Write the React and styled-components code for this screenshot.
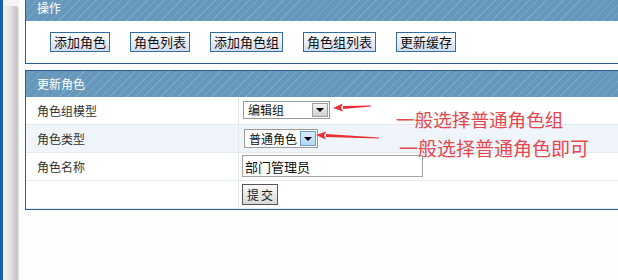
import React from "react";
import styled, { createGlobalStyle } from "styled-components";

const GlobalStyle = createGlobalStyle`
  html, body {
    margin: 0;
    padding: 0;
    background: #fdfdfd;
    overflow: hidden;
  }
  body {
    font-family: "Noto Sans CJK SC", "Liberation Sans", sans-serif;
    font-size: 12px;
    color: #333;
  }
`

const Page = styled.div`
  display: flex;
  width: 618px;
  height: 280px;
  overflow: hidden;
`

const Frame = styled.div`
  flex: 0 0 19px;
  display: flex;
  background: #fdfdfd;
`

const FrameEdge = styled.div`
  width: 3px;
  background: #1d5fb3;
`

const ScrollTrack = styled.div`
  width: 16px;
  padding-top: 6px;
  background: #f4f4f4;
`

const ScrollThumb = styled.div`
  height: 100%;
  margin-left: 1px;
  border-top-right-radius: 4px;
  background: linear-gradient(90deg, #f2f2f2 0%, #e4e4e4 40%, #c4c4c4 85%, #e8e8e8 100%);
`

const Main = styled.div`
  flex: 1;
  padding-left: 6px;
  display: flex;
  flex-direction: column;
  gap: 6px;
`

const Panel = styled.div`
  position: relative;
  width: 640px;
  border: 1px solid #2c5d90;
  border-right: none;
  margin-top: ${p => p.$offset || 0}px;
  background: #fff;
`

const PanelHeader = styled.div`
  height: 26px;
  line-height: 26px;
  padding-left: 11px;
  color: #fff;
  font-size: 12px;
  background: repeating-linear-gradient(135deg, #6797ba 0 5px, #7ca8c7 5px 6px);
`

const Toolbar = styled.div`
  display: flex;
  gap: 20px;
  padding: 11px 24px 11px 24px;
`

const ToolButton = styled.button`
  height: 20px;
  padding: 0 3px;
  border: 1px solid #2f6e9e;
  background: linear-gradient(#ffffff, #d3dbef);
  font-family: inherit;
  font-size: 13px;
  line-height: 18px;
  color: #111;
`

const Row = styled.div`
  display: grid;
  grid-template-columns: 213px 1fr;
  height: 27px;
  border-bottom: 1px solid #e3ebf2;
  background: ${p => (p.$alt ? "#eff5fa" : "#fff")};
`

const Label = styled.div`
  padding-left: 11px;
  line-height: 27px;
  border-right: 1px solid #e3ebf2;
  color: #333;
`

const Field = styled.div`
  display: flex;
  align-items: flex-start;
  padding-top: ${p => p.$top}px;
  padding-left: ${p => p.$left}px;
`

const SelectBox = styled.div`
  display: flex;
  width: ${p => p.$width}px;
  height: ${p => p.$height}px;
  border: 1px solid #9a9a9a;
  box-sizing: border-box;
  background: #fff;
`

const SelectText = styled.span`
  flex: 1;
  padding-left: 4px;
  font-size: 12px;
  line-height: ${p => p.$height - 2}px;
  color: #111;
`

const SelectArrow = styled.span`
  width: 16px;
  margin: 1px;
  display: flex;
  align-items: center;
  justify-content: center;
  box-sizing: border-box;
  border: 1px solid ${p => (p.$hover ? "#6d9cc9" : "#a0a0a0")};
  background: ${p =>
    p.$hover
      ? "linear-gradient(#d8ebfb, #b6d6f3)"
      : "linear-gradient(#f4f4f4, #cfcfcf)"};

  &::after {
    content: "";
    border-left: 4px solid transparent;
    border-right: 4px solid transparent;
    border-top: 4px solid #000;
  }
`

const TextInput = styled.input`
  width: 181px;
  height: 22px;
  box-sizing: border-box;
  padding: 0 2px;
  border: 1px solid #a5a5a5;
  font-family: inherit;
  font-size: 13px;
  color: #111;
  outline: none;
`

const SubmitButton = styled.button`
  width: 36px;
  height: 21px;
  padding: 0;
  border: 1px solid #555;
  background: linear-gradient(#fafafa, #d8d8d8);
  font-family: inherit;
  font-size: 12px;
  letter-spacing: 2px;
  text-indent: 2px;
  color: #222;
`

const Note = styled.div`
  position: absolute;
  left: ${p => p.$x}px;
  top: ${p => p.$y}px;
  font-size: ${p => p.$size}px;
  line-height: 20px;
  color: #e5484e;
  white-space: nowrap;
`

const ArrowLayer = styled.svg`
  position: absolute;
  left: 0;
  top: 0;
  width: 400px;
  height: 80px;
  pointer-events: none;
`

const Arrow = ({ x1, y1, x2, y2 }) => {
  // tail (x1,y1) thin, head tip at (x2,y2)
  const dx = x2 - x1;
  const dy = y2 - y1;
  const len = Math.hypot(dx, dy);
  const ux = dx / len;
  const uy = dy / len;
  const nx = -uy;
  const ny = ux;
  const hb = 10;
  const bx = x2 - ux * hb;
  const by = y2 - uy * hb;
  const shaft = [
    [x1 + nx * 0.4, y1 + ny * 0.4],
    [bx + nx * 1.6, by + ny * 1.6],
    [bx - nx * 1.6, by - ny * 1.6],
    [x1 - nx * 0.4, y1 - ny * 0.4],
  ];
  const head = [
    [x2, y2],
    [bx + nx * 4, by + ny * 4],
    [bx + ux * 2, by + uy * 2],
    [bx - nx * 4, by - ny * 4],
  ];
  const pts = a => a.map(p => p.join(",")).join(" ");
  return (
    <g fill="#ea2f34">
      <polygon points={pts(shaft)} />
      <polygon points={pts(head)} />
    </g>
  );
};

const toolButtons = ["添加角色", "角色列表", "添加角色组", "角色组列表", "更新缓存"];

export default function App() {
  return (
    <>
      <GlobalStyle />
      <Page>
        <Frame>
          <FrameEdge />
          <ScrollTrack>
            <ScrollThumb />
          </ScrollTrack>
        </Frame>
        <Main>
          <Panel $offset={-6}>
            <PanelHeader>操作</PanelHeader>
            <Toolbar>
              {toolButtons.map(t => (
                <ToolButton key={t}>{t}</ToolButton>
              ))}
            </Toolbar>
          </Panel>

          <Panel>
            <PanelHeader>更新角色</PanelHeader>
            <Row>
              <Label>角色组模型</Label>
              <Field $top={4} $left={4}>
                <SelectBox $width={87} $height={18}>
                  <SelectText $height={18}>编辑组</SelectText>
                  <SelectArrow />
                </SelectBox>
              </Field>
            </Row>
            <Row $alt>
              <Label>角色类型</Label>
              <Field $top={4} $left={5}>
                <SelectBox $width={74} $height={19}>
                  <SelectText $height={19}>普通角色</SelectText>
                  <SelectArrow $hover />
                </SelectBox>
              </Field>
            </Row>
            <Row>
              <Label>角色名称</Label>
              <Field $top={2} $left={3}>
                <TextInput defaultValue="部门管理员" />
              </Field>
            </Row>
            <Row>
              <Label />
              <Field $top={3} $left={3}>
                <SubmitButton>提交</SubmitButton>
              </Field>
            </Row>

            <ArrowLayer viewBox="0 0 400 80">
              <Arrow x1={345} y1={35} x2={307} y2={37} />
              <Arrow x1={353} y1={67} x2={290} y2={64} />
            </ArrowLayer>
            <Note $x={370} $y={38} $size={18.6}>一般选择普通角色组</Note>
            <Note $x={373} $y={67} $size={19}>一般选择普通角色即可</Note>
          </Panel>
        </Main>
      </Page>
    </>
  );
}
